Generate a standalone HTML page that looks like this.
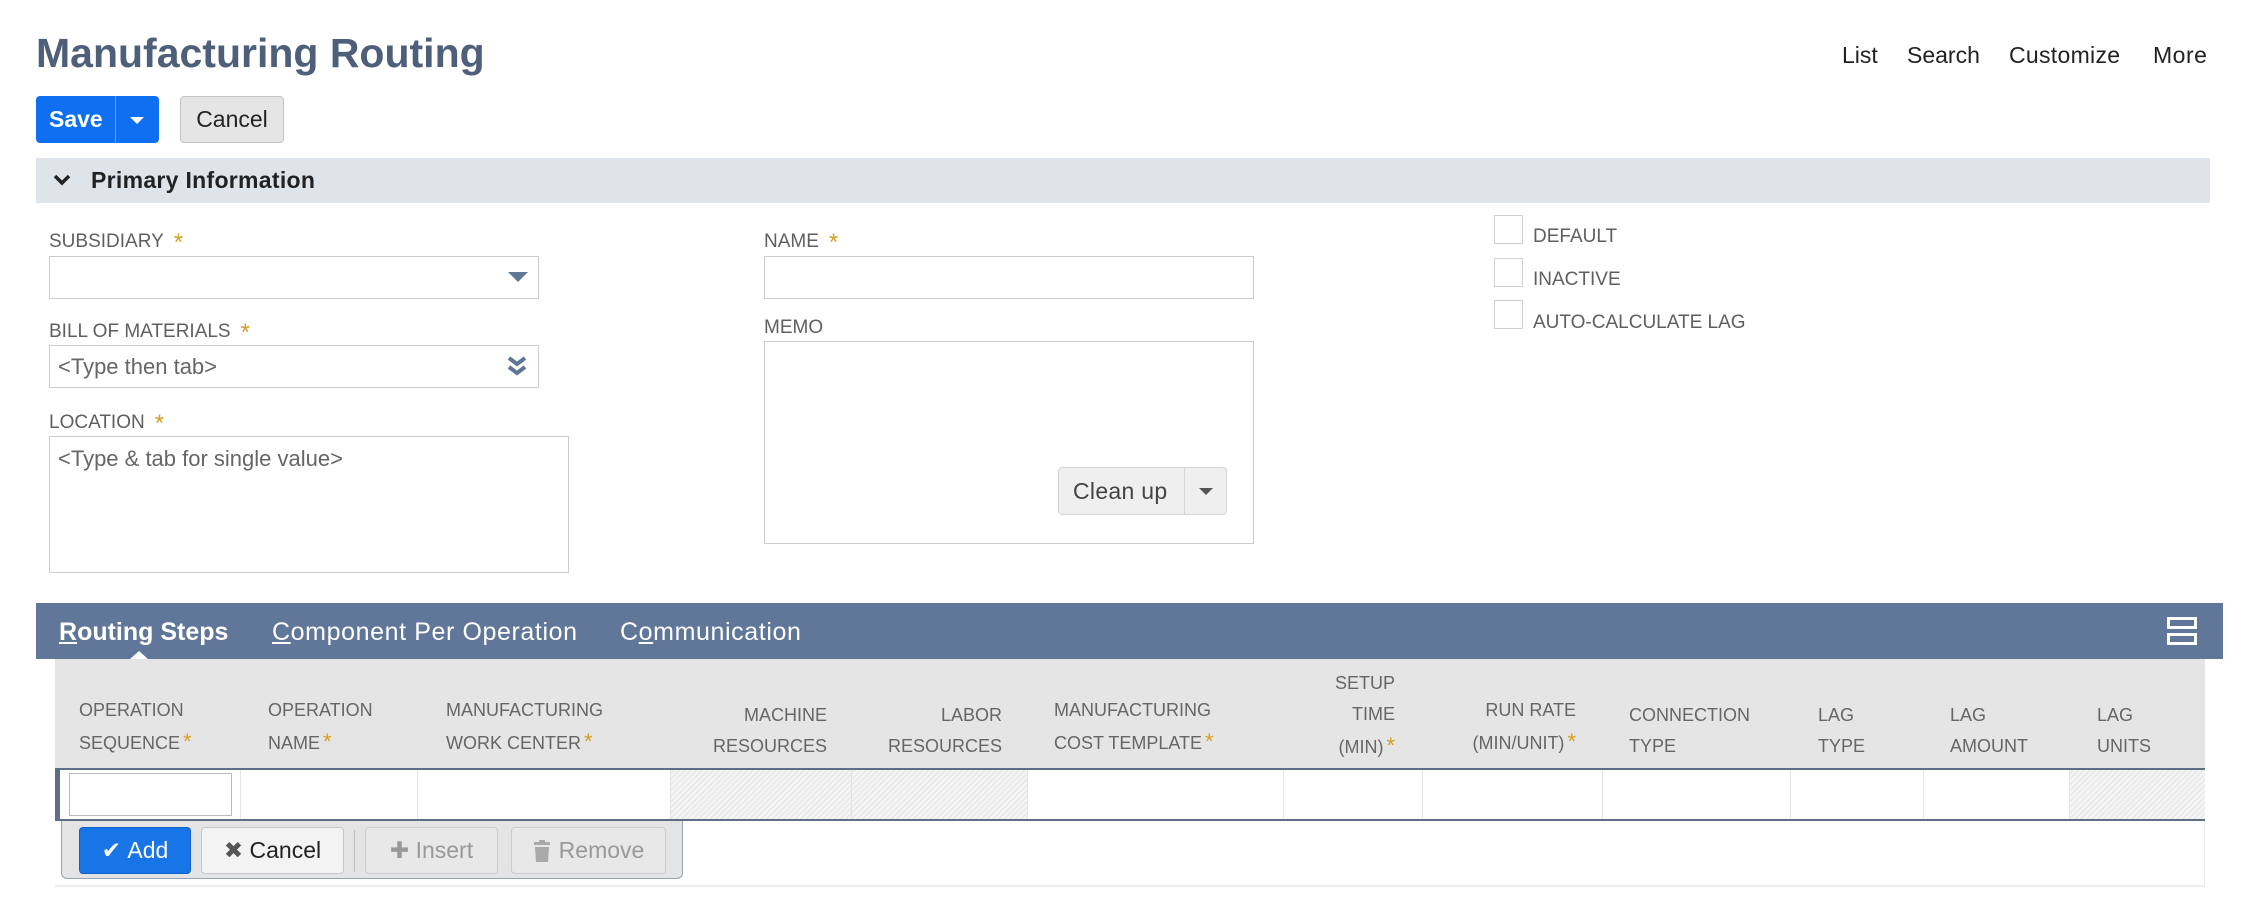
<!DOCTYPE html>
<html><head><meta charset="utf-8"><style>
*{box-sizing:border-box;margin:0;padding:0}
body{width:2255px;height:897px;background:#fff;font-family:"Liberation Sans",sans-serif;position:relative;overflow:hidden;color:#333}
.a{position:absolute}
.lbl{position:absolute;font-size:19px;color:#5f5f5f;white-space:nowrap}
.st{color:#d5a021;font-size:24px;margin-left:10px;vertical-align:-3px}
.inp{position:absolute;border:1px solid #ccc;background:#fff}
.ph{font-size:22px;color:#666;position:absolute;left:8px}
.hd{position:absolute;font-size:18px;color:#666;line-height:31px;white-space:nowrap}
.hd .s{color:#d5a021;font-size:22px;margin-left:3px}
.r{text-align:right}
.hatch{position:absolute;top:0;bottom:0;background:repeating-linear-gradient(135deg,#f6f6f6 0 2px,#eaeaea 2px 4px)}
.vl{position:absolute;top:0;bottom:0;width:1px;background:#e4e4e4}
.btn{position:absolute;border-radius:4px;font-size:23px;display:flex;align-items:center;justify-content:center}
</style></head><body>
<div class="a" style="left:36px;top:30px;font-size:41px;font-weight:bold;color:#4d5f79">Manufacturing Routing</div>
<div class="a" style="left:1842px;top:42px;font-size:23px;color:#222">List</div>
<div class="a" style="left:1907px;top:42px;font-size:23px;color:#222">Search</div>
<div class="a" style="left:2009px;top:42px;font-size:23px;color:#222;letter-spacing:0.3px">Customize</div>
<div class="a" style="left:2153px;top:42px;font-size:23px;color:#222;letter-spacing:0.5px">More</div>

<div class="a" style="left:36px;top:96px;width:123px;height:47px;background:#0e6ff1;border-radius:4px"></div>
<div class="a" style="left:49px;top:106px;font-size:23px;font-weight:bold;color:#fff">Save</div>
<div class="a" style="left:115px;top:96px;width:1px;height:47px;background:#6aa6f7"></div>
<div class="a" style="left:130px;top:117px;width:0;height:0;border-left:7px solid transparent;border-right:7px solid transparent;border-top:7px solid #fff"></div>
<div class="a" style="left:180px;top:96px;width:104px;height:47px;background:#e5e5e5;border:1px solid #c6c6c6;border-radius:4px;font-size:23px;color:#222;text-align:center;line-height:45px">Cancel</div>

<div class="a" style="left:36px;top:158px;width:2174px;height:45px;background:#dfe4eb"></div>
<svg class="a" style="left:52px;top:172px" width="20" height="16"><path d="M3 4 L10 11 L17 4" stroke="#222" stroke-width="3.5" fill="none"/></svg>
<div class="a" style="left:91px;top:167px;font-size:23px;font-weight:bold;color:#222;letter-spacing:0.3px">Primary Information</div>

<div class="lbl" style="left:49px;top:229px">SUBSIDIARY<span class="st">*</span></div>
<div class="inp" style="left:49px;top:256px;width:490px;height:43px"></div>
<div class="a" style="left:508px;top:272px;border-left:10px solid transparent;border-right:10px solid transparent;border-top:10px solid #5f7694"></div>

<div class="lbl" style="left:49px;top:319px">BILL OF MATERIALS<span class="st">*</span></div>
<div class="inp" style="left:49px;top:345px;width:490px;height:43px"><span class="ph" style="top:8px">&lt;Type then tab&gt;</span></div>
<svg class="a" style="left:506px;top:355px" width="22" height="22"><path d="M3 3 L11 9 L19 3 M3 12 L11 18 L19 12" stroke="#5f7694" stroke-width="4" fill="none"/></svg>

<div class="lbl" style="left:49px;top:410px">LOCATION<span class="st">*</span></div>
<div class="inp" style="left:49px;top:436px;width:520px;height:137px"><span class="ph" style="top:9px">&lt;Type &amp; tab for single value&gt;</span></div>

<div class="lbl" style="left:764px;top:229px">NAME<span class="st">*</span></div>
<div class="inp" style="left:764px;top:256px;width:490px;height:43px"></div>
<div class="lbl" style="left:764px;top:317px">MEMO</div>
<div class="inp" style="left:764px;top:341px;width:490px;height:203px"></div>
<div class="a" style="left:1058px;top:467px;width:169px;height:48px;background:#efefef;border:1px solid #d5d5d5;border-radius:4px"></div>
<div class="a" style="left:1073px;top:478px;font-size:23px;color:#444;letter-spacing:0.3px">Clean up</div>
<div class="a" style="left:1184px;top:467px;width:1px;height:48px;background:#d5d5d5"></div>
<div class="a" style="left:1199px;top:488px;border-left:7px solid transparent;border-right:7px solid transparent;border-top:7px solid #555"></div>

<div class="inp" style="left:1494px;top:215px;width:29px;height:29px;border-color:#d0d0d0"></div>
<div class="inp" style="left:1494px;top:258px;width:29px;height:29px;border-color:#d0d0d0"></div>
<div class="inp" style="left:1494px;top:300px;width:29px;height:29px;border-color:#d0d0d0"></div>
<div class="lbl" style="left:1533px;top:226px">DEFAULT</div>
<div class="lbl" style="left:1533px;top:269px">INACTIVE</div>
<div class="lbl" style="left:1533px;top:312px">AUTO-CALCULATE LAG</div>

<div class="a" style="left:36px;top:603px;width:2187px;height:56px;background:#607799"></div>
<div class="a" style="left:59px;top:618px;font-size:25px;font-weight:bold;color:#fff"><u>R</u>outing Steps</div>
<div class="a" style="left:272px;top:618px;font-size:25px;color:#fff;letter-spacing:0.6px"><u>C</u>omponent Per Operation</div>
<div class="a" style="left:620px;top:618px;font-size:25px;color:#fff;letter-spacing:0.6px">C<u>o</u>mmunication</div>
<div class="a" style="left:130px;top:651px;border-left:9px solid transparent;border-right:9px solid transparent;border-bottom:8px solid #fff"></div>
<div class="a" style="left:2167px;top:617px;width:30px;height:12px;border:3px solid #fff;background:#607799"></div>
<div class="a" style="left:2167px;top:633px;width:30px;height:12px;border:3px solid #fff;background:#607799"></div>

<div class="a" style="left:55px;top:659px;width:2150px;height:110px;background:#e5e5e5"></div>
<div class="hd" style="left:79px;top:695px">OPERATION<br>SEQUENCE<span class="s">*</span></div>
<div class="hd" style="left:268px;top:695px">OPERATION<br>NAME<span class="s">*</span></div>
<div class="hd" style="left:446px;top:695px">MANUFACTURING<br>WORK CENTER<span class="s">*</span></div>
<div class="hd r" style="right:1428px;top:700px">MACHINE<br>RESOURCES</div>
<div class="hd r" style="right:1253px;top:700px">LABOR<br>RESOURCES</div>
<div class="hd" style="left:1054px;top:695px">MANUFACTURING<br>COST TEMPLATE<span class="s">*</span></div>
<div class="hd r" style="right:860px;top:668px">SETUP<br>TIME<br>(MIN)<span class="s">*</span></div>
<div class="hd r" style="right:679px;top:695px">RUN RATE<br>(MIN/UNIT)<span class="s">*</span></div>
<div class="hd" style="left:1629px;top:700px">CONNECTION<br>TYPE</div>
<div class="hd" style="left:1818px;top:700px">LAG<br>TYPE</div>
<div class="hd" style="left:1950px;top:700px">LAG<br>AMOUNT</div>
<div class="hd" style="left:2097px;top:700px">LAG<br>UNITS</div>

<div class="a" style="left:55px;top:768px;width:2150px;height:53px;background:#fff;border-top:2px solid #5e6e86;border-bottom:2px solid #5e6e86">
  <div class="hatch" style="left:615px;width:357px"></div>
  <div class="hatch" style="left:2014px;width:136px"></div>
  <div class="vl" style="left:185px"></div><div class="vl" style="left:362px"></div>
  <div class="vl" style="left:615px"></div><div class="vl" style="left:796px"></div>
  <div class="vl" style="left:972px"></div><div class="vl" style="left:1228px"></div>
  <div class="vl" style="left:1367px"></div><div class="vl" style="left:1547px"></div>
  <div class="vl" style="left:1735px"></div><div class="vl" style="left:1868px"></div>
  <div class="vl" style="left:2014px"></div>
  <div class="a" style="left:0;top:-2px;width:5px;height:53px;background:#5e6e86"></div>
  <div class="inp" style="left:14px;top:3px;width:163px;height:43px;border-color:#bbb"></div>
</div>
<div class="a" style="left:55px;top:821px;width:2150px;height:66px;border-bottom:2px solid #eee;border-right:1px solid #eee"></div>
<div class="a" style="left:61px;top:821px;width:622px;height:58px;background:#e4e4e4;border:1px solid #98a2b0;border-top:none;border-radius:0 0 6px 6px"></div>
<div class="btn" style="left:79px;top:827px;width:112px;height:47px;background:#1875e8;color:#fff;border:1px solid #1160c8">✔&nbsp;Add</div>
<div class="btn" style="left:201px;top:827px;width:143px;height:47px;background:#f3f3f3;border:1px solid #c8c8c8;color:#222"><span style="color:#555">✖</span>&nbsp;Cancel</div>
<div class="a" style="left:354px;top:830px;width:1px;height:42px;background:#bbb"></div>
<div class="btn" style="left:365px;top:827px;width:133px;height:47px;background:#e8e8e8;border:1px solid #ccc;color:#999">✚&nbsp;Insert</div>
<div class="btn" style="left:511px;top:827px;width:155px;height:47px;background:#e8e8e8;border:1px solid #ccc;color:#999">
<svg width="18" height="22" style="margin-right:8px"><rect x="1" y="2" width="16" height="3" fill="#aaa"/><rect x="6" y="0" width="6" height="3" fill="#aaa"/><path d="M2 7 H16 L15 22 H3 Z" fill="#aaa"/></svg>Remove</div>
</body></html>
